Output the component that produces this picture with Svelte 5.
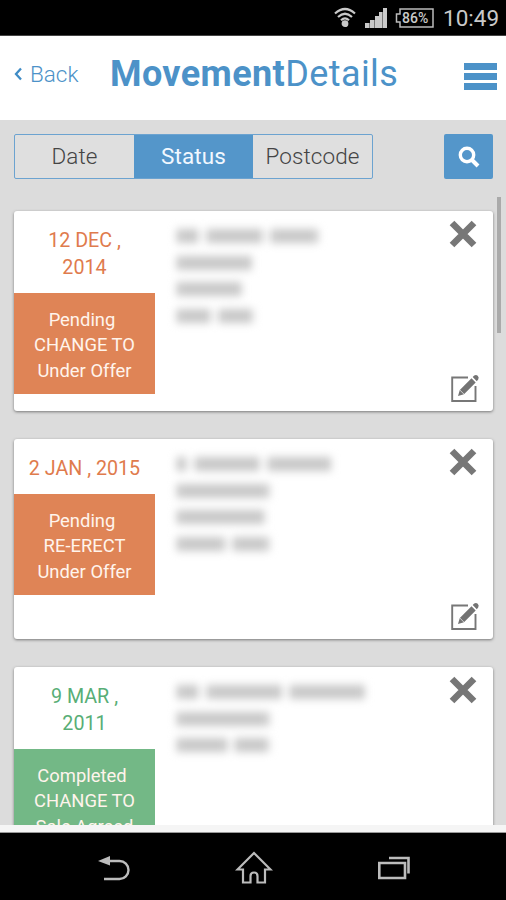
<script>
  const tabs = ['Date', 'Status', 'Postcode'];
  const active = 'Status';
  // Hidden address lines: widths of each obscured word.
  const cards = [
    { date: ['12 DEC ,', '2014'], status: ['Pending', 'CHANGE TO', 'Under Offer'], tone: 'orange',
      address: [[22, 56, 47], [75], [65], [34, 34]] },
    { date: ['2 JAN , 2015'], status: ['Pending', 'RE-ERECT', 'Under Offer'], tone: 'orange',
      address: [[10, 65, 63], [92], [88], [48, 36]] },
    { date: ['9 MAR ,', '2011'], status: ['Completed', 'CHANGE TO', 'Sale Agreed'], tone: 'green',
      address: [[22, 75, 75], [92], [50, 34]] }
  ];
</script>

<div class="screen">
  <div class="statusbar">
    <svg class="wifi" width="22" height="21" viewBox="0 0 22 21" fill="none" stroke="#c9c9c9" stroke-width="2.2">
      <path d="M1 6.5Q11-2.5 21 6.5M4 10Q11 3.5 18 10M7 13.2Q11 9.5 15 13.2" />
      <circle cx="11" cy="16.7" r="2.3" fill="#c9c9c9" />
    </svg>
    <svg class="signal" width="24" height="20" viewBox="0 0 24 20" fill="#c9c9c9">
      <path d="M1 15h4.6v5H1zM6 12h4.6v8H6zM11 8h4.6v12H11zM15 4h3.6v16H15zM19 0h4v20h-4z" />
    </svg>
    <div class="battery">
      <svg width="39" height="20" viewBox="0 0 39 20" fill="none" stroke="#bbb" stroke-width="1.5">
        <path d="M5 1H38V19H5V14H1.5V6H5Z" />
      </svg>
      <span>86%</span>
    </div>
    <span class="clock">10:49</span>
  </div>

  <header>
    <div class="back">
      <svg width="9" height="14" viewBox="0 0 9 14" fill="none" stroke="#3f8cc6" stroke-width="2.3"><path d="M7 1.5L2 7l5 5.5" /></svg>
      <span>Back</span>
    </div>
    <h1><b>Movement</b>Details</h1>
    <div class="menu"><i></i><i></i><i></i></div>
  </header>

  <main>
    <div class="toolbar">
      <div class="tabs">
        {#each tabs as tab}
          <div class="tab" class:active={tab === active}>{tab}</div>
        {/each}
      </div>
      <div class="search">
        <svg width="22" height="22" viewBox="0 0 22 22" fill="none" stroke="#fff">
          <circle cx="9" cy="9" r="6.7" stroke-width="3.4" />
          <path d="M14 14l6 6" stroke-width="4" />
        </svg>
      </div>
    </div>

    <div class="list">
      {#each cards as card}
        <article class={card.tone}>
          <div class="side">
            <div class="date">{#each card.date as line}<div>{line}</div>{/each}</div>
            <div class="state">{#each card.status as line}<div>{line}</div>{/each}</div>
          </div>
          <div class="address">
            {#each card.address as line}
              <div class="line">{#each line as w}<i style="width:{w}px"></i>{/each}</div>
            {/each}
          </div>
          <div class="actions">
            <svg width="28" height="28" viewBox="0 0 28 28" stroke="#777" stroke-width="6.6"><path d="M3 3l22 22M25 3L3 25" /></svg>
            <svg width="30" height="30" viewBox="0 0 30 30" fill="none">
              <path d="M18 4.5H2.2V28H25.5V13" stroke="#777" stroke-width="1.9" />
              <path d="M8 23l1.8-6L21.5 5.3l4.2 4.2L14 21.2zM22.7 4.1l1.5-1.5q1.8-1.5 3.5 0.2t0.5 3.6L26.8 8.2z" fill="#737373" />
              <path d="M9.8 17l4.2 4.2" stroke="#fff" stroke-width=".7" />
            </svg>
          </div>
        </article>
      {/each}
    </div>
    <div class="thumb"></div>
  </main>
  <div class="strip"></div>

  <nav>
    <svg width="34" height="26" viewBox="0 0 34 26" fill="none" stroke="#bcbcbc" stroke-width="2.4">
      <path d="M11 6H22.5a9 9 0 0 1 0 18H7" /><path d="M1 6L13 1v9.5z" fill="#bcbcbc" stroke="none" />
    </svg>
    <svg width="38" height="34" viewBox="0 0 38 34" fill="none" stroke="#bcbcbc" stroke-width="2.2">
      <path d="M19 2L2.5 18.5H8V31.5h7.5V25q0-3.5 3.5-3.5t3.5 3.5v6.5H30V18.5h5.5z" />
    </svg>
    <svg width="34" height="24" viewBox="0 0 34 24" fill="none" stroke="#bcbcbc" stroke-width="2.6">
      <path d="M2.3 7H28v15H2.3z" /><path d="M12 2H31.5V17.5" />
    </svg>
  </nav>
</div>

<style>
  :global(body) { margin: 0; background: #000; }
  .screen { width: 506px; height: 900px; display: flex; flex-direction: column; overflow: hidden; background: #000; font-family: Roboto, "Liberation Sans", sans-serif; }
  svg { display: block; flex: none; }
  .statusbar { height: 36px; flex: none; display: flex; align-items: center; justify-content: flex-end; padding-right: 8px; box-sizing: border-box; border-bottom: 1px solid #444; color: #c9c9c9; }
  .wifi { margin-right: 8px; }
  .signal { margin-right: 7px; }
  .battery { position: relative; }
  .battery span { position: absolute; left: 7px; top: 3px; font-size: 14px; line-height: 15px; font-weight: 500; }
  .clock { width: 55px; margin-left: 9px; padding-top: 1px; font-size: 22.5px; line-height: 35px; text-align: right; white-space: nowrap; }
  header { height: 84px; flex: none; background: #fff; display: flex; align-items: center; color: #4c92c8; padding: 0 9px 8px 14px; box-sizing: border-box; }
  .back { display: flex; align-items: center; gap: 7px; width: 96px; font-size: 22.5px; font-weight: 300; }
  h1 { margin: 0; font-size: 36px; font-weight: 400; letter-spacing: .4px; white-space: nowrap; line-height: 42px; }
  .menu { display: flex; flex-direction: column; gap: 3px; margin-left: auto; padding-top: 5px; }
  .menu i { width: 33px; height: 7px; background: #4c92c8; }
  main { position: relative; flex: none; height: 705px; overflow: hidden; background: #dcdcdc; box-sizing: border-box; padding: 14px 13px 0 14px; }
  .toolbar { display: flex; justify-content: space-between; height: 45px; }
  .tabs { display: flex; width: 359px; box-sizing: border-box; border: 1px solid #6ca3d0; border-radius: 2px; background: #dfdfdf; }
  .tab { flex: 1; text-align: center; font-size: 22.5px; line-height: 43px; font-weight: 300; color: #444; letter-spacing: .1px; }
  .tab.active { background: #5496ca; color: #f1f8ff; font-weight: 400; }
  .search { width: 49px; border-radius: 2px; background: #5496ca; display: flex; align-items: center; justify-content: center; }
  .list { display: flex; flex-direction: column; gap: 28px; padding-top: 32px; }
  article { display: flex; height: 200px; flex: none; background: #fff; border-radius: 3px; box-shadow: 0 1px 3px #777; }
  .side { width: 141px; text-align: center; }
  .date { padding: 16px 0 12px; font-size: 19.7px; line-height: 27px; }
  .state { height: 101px; box-sizing: border-box; padding-top: 14px; color: #fff4ec; font-size: 18.4px; line-height: 25.3px; }
  .state div:first-child { padding-right: 5px; }
  .orange .date { color: #df7b4d; }
  .orange .state { background: #df8456; }
  .green .date { color: #58ae76; }
  .green .state { background: #73b886; }
  .address { flex: 1; padding: 12px 0 0 22px; filter: blur(4.5px); }
  .line { height: 26.5px; display: flex; align-items: center; gap: 8px; }
  .line i { height: 14px; background: repeating-linear-gradient(90deg, #c0c0c0 0 6px, #d2d2d2 6px 11px); }
  .actions { width: 44px; display: flex; flex-direction: column; justify-content: space-between; padding: 9px 0 8px; box-sizing: border-box; }
  .actions svg:last-child { margin-left: 1px; }
  .thumb { position: absolute; left: 497px; top: 77px; width: 4px; height: 136px; background: #aaa; }
  .strip { height: 8px; flex: none; box-sizing: border-box; background: #f5f5f5; border-bottom: 1px solid #999; }
  nav { height: 67px; display: flex; justify-content: space-between; align-items: center; padding: 2px 95px 0 97px; box-sizing: border-box; }
</style>
